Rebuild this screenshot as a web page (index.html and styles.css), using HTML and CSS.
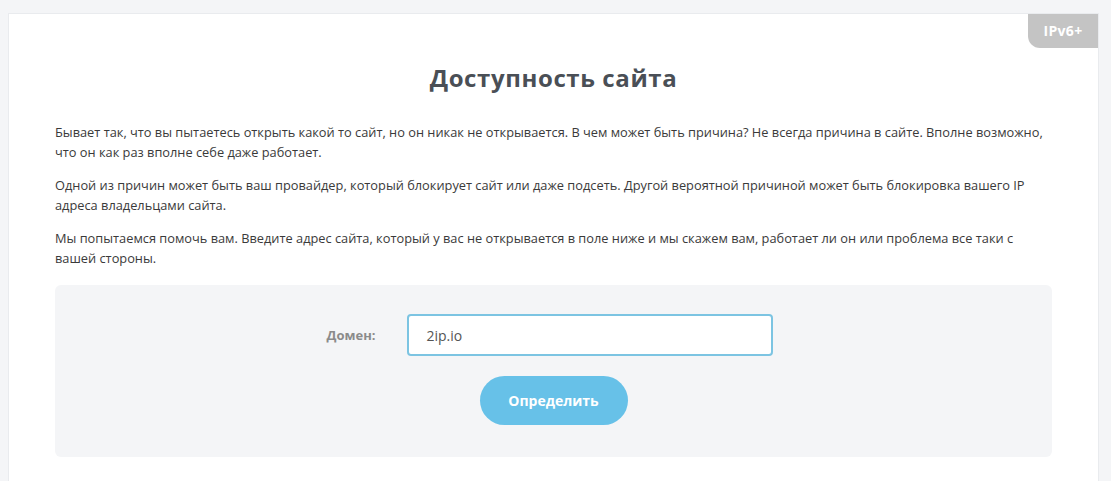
FILE: index.html
```html
<!doctype html>
<html lang="ru">
<head>
    <meta charset="utf-8"/>
    <title>Доступность сайта</title>
    <link rel="stylesheet" href="styles.css">
</head>
<body>
    <div class="card">
        <span class="badge">IPv6+</span>
        <h1>Доступность сайта</h1>
        <p>Бывает так, что вы пытаетесь открыть какой то сайт, но он никак не открывается. В чем может быть причина? Не всегда причина в сайте. Вполне возможно, что он как раз вполне себе даже работает.</p>
        <p>Одной из причин может быть ваш провайдер, который блокирует сайт или даже подсеть. Другой вероятной причиной может быть блокировка вашего IP адреса владельцами сайта.</p>
        <p>Мы попытаемся помочь вам. Введите адрес сайта, который у вас не открывается в поле ниже и мы скажем вам, работает ли он или проблема все таки с вашей стороны.</p>
        <form class="check">
            <div class="row">
                <label for="domain">Домен:</label>
                <input id="domain" type="text" value="2ip.io">
            </div>
            <button type="button">Определить</button>
        </form>
    </div>
</body>
</html>
```

FILE: styles.css
```css
html, body {
    margin: 0;
    background: #f4f5f7;
}
body {
    padding: 13px 12px 0 8px;
    font-family: "Open Sans", "Noto Sans", sans-serif;
}
.card {
    position: relative;
    background: #fff;
    border: 1px solid #e9ebee;
    border-bottom: none;
    padding: 46px 46px 24px 46px;
}
.badge {
    position: absolute;
    top: 0;
    right: 0;
    width: 70px;
    height: 34px;
    line-height: 34px;
    text-align: center;
    background: #c4c4c4;
    color: #fff;
    font-weight: 700;
    font-size: 14px;
    letter-spacing: 0.3px;
    border-bottom-left-radius: 12px;
}
h1 {
    margin: 0 0 26px;
    text-align: center;
    font-size: 24px;
    font-weight: 700;
    letter-spacing: 0.6px;
    color: #4a4f56;
    line-height: 36px;
}
p {
    margin: 0 0 13px;
    font-size: 12.8px;
    line-height: 20px;
    color: #3a3a3a;
}
.check {
    margin-top: 17px;
    background: #f4f5f7;
    border-radius: 6px;
    padding: 29px 0 32px;
    display: flex;
    flex-direction: column;
    align-items: center;
    gap: 20px;
}
.row {
    display: flex;
    align-items: center;
    gap: 32px;
    margin-left: -7px;
}
label {
    font-size: 13px;
    font-weight: 700;
    color: #8b8b8b;
}
input {
    width: 366px;
    height: 42px;
    box-sizing: border-box;
    border: 2px solid #7cc4e2;
    border-radius: 4px;
    padding: 0 17px;
    font-family: "Open Sans", sans-serif;
    font-size: 14px;
    color: #555;
    outline: none;
}
button {
    width: 148px;
    height: 49px;
    border: none;
    border-radius: 25px;
    background: #67c1e8;
    color: #fff;
    font-family: "Open Sans", sans-serif;
    font-size: 14px;
    font-weight: 700;
}
```
